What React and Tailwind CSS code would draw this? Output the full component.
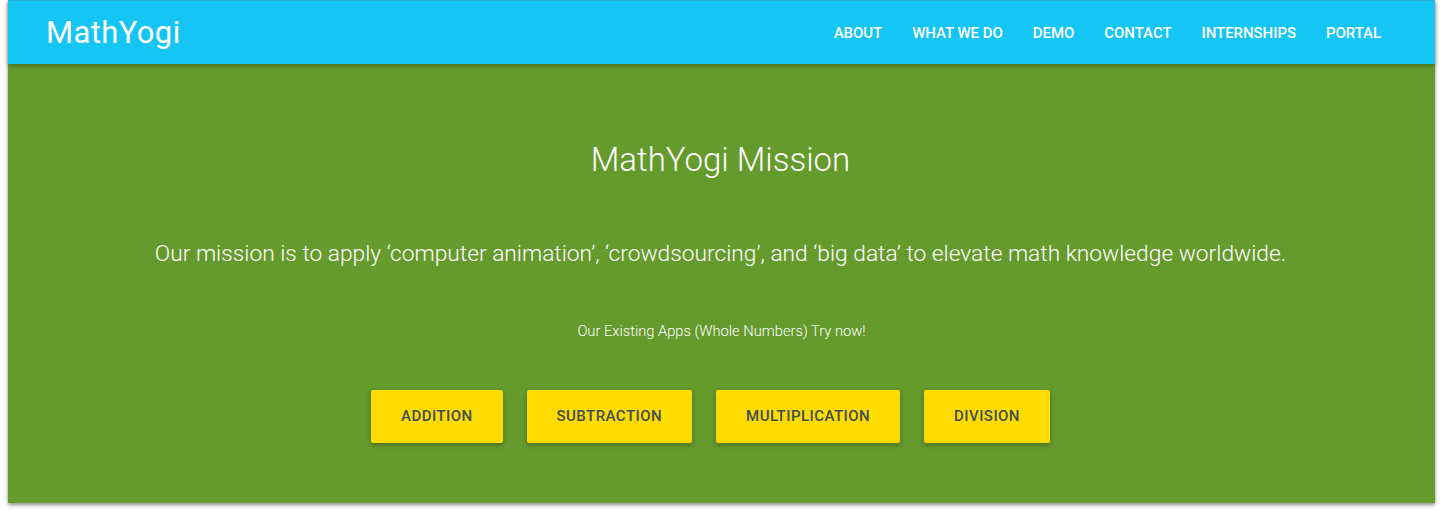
import React from "react";

const nav = ["ABOUT", "WHAT WE DO", "DEMO", "CONTACT", "INTERNSHIPS", "PORTAL"];
const apps = ["ADDITION", "SUBTRACTION", "MULTIPLICATION", "DIVISION"];

export default function App() {
  return (
    <div className="w-[1440px] h-[511px] bg-white overflow-hidden" style={{ fontFamily: "Roboto, 'Liberation Sans', sans-serif" }}>
      <div className="ml-[8px] w-[1427px] h-[503px] flex flex-col relative shadow-[0_2px_4px_rgba(0,0,0,0.45)]">
        <header className="relative z-10 h-[64px] bg-[#15c5f3] border-t border-[#2ab0d8] flex items-center justify-between pl-[38px] pr-[54px] shadow-[0_2px_4px_rgba(0,0,0,0.3)]">
          <div className="text-white text-[31px] leading-none tracking-[0.4px]">MathYogi</div>
          <nav className="flex items-center gap-[30px] mt-[1px]">
            {nav.map((n) => (
              <a key={n} className="text-white text-[15px] font-medium tracking-[-0.05px]">{n}</a>
            ))}
          </nav>
        </header>
        <main className="flex-1 bg-[#659a2d] flex flex-col items-center text-white">
          <h1 className="mt-[76px] text-[33px] font-light leading-[40px] -ml-[2px]">MathYogi Mission</h1>
          <p className="mt-[60px] text-[22.75px] font-light leading-[28px] -ml-[2px]">
            Our mission is to apply ‘computer animation’, ‘crowdsourcing’, and ‘big data’ to elevate math knowledge worldwide.
          </p>
          <p className="mt-[53px] text-[14.7px] font-light leading-[20px]">Our Existing Apps (Whole Numbers) Try now!</p>
          <div className="mt-[49px] mr-[22px] flex gap-[24px]">
            {apps.map((a) => (
              <button key={a} className="h-[53px] px-[30px] bg-[#fedc00] text-[#414d53] text-[15px] font-medium tracking-[0.45px] rounded-[2px] shadow-[0_2px_5px_rgba(0,0,0,0.3)]">
                {a}
              </button>
            ))}
          </div>
        </main>
      </div>
    </div>
  );
}
